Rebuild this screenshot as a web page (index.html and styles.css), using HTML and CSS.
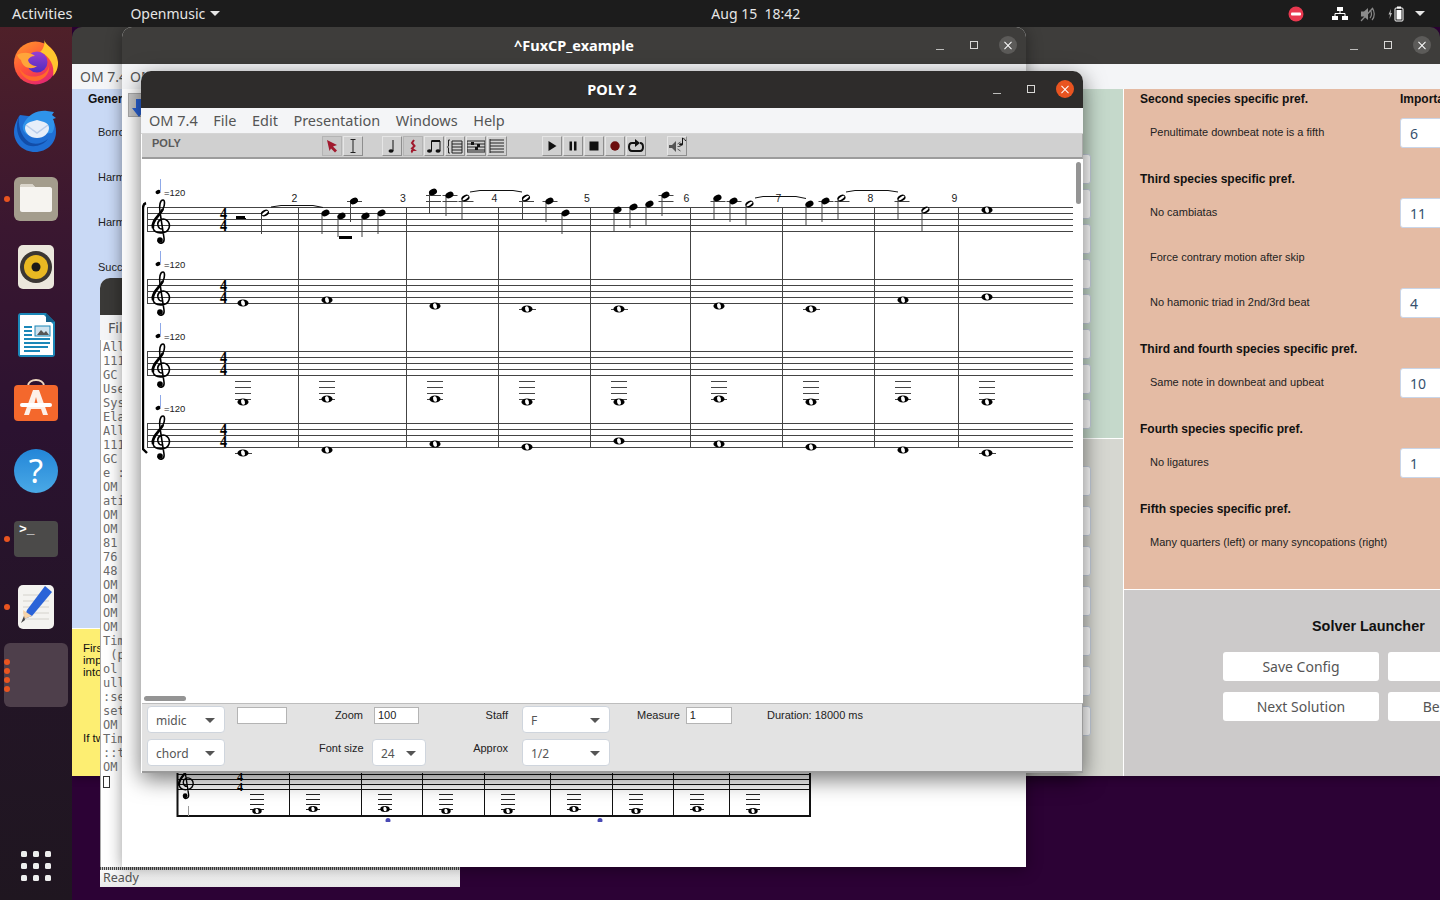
FILE: index.html
```html
<!DOCTYPE html>
<html lang="en">
<head>
    <meta charset="UTF-8">
    <meta name="viewport" content="width=device-width, initial-scale=1.0">
    <title>POLY 2</title>
    <link rel="stylesheet" href="styles.css">
</head>
<body>
    <div class="topbar">
        <span class="activities">Activities</span>
        <span class="app-name">Openmusic<i class="caret"></i></span>
        <span class="clock">Aug 15&nbsp; 18:42</span>
        <div class="tray">
            <svg class="tray-dnd" width="16" height="16" viewBox="0 0 16 16"><circle cx="8" cy="8" r="7.5" fill="#e8384f"/><rect x="3" y="6.5" width="10" height="3" rx="1" fill="#fff"/></svg>
            <svg class="tray-net" width="16" height="14" viewBox="0 0 16 14"><path d="M5 0h6v4H5zM0 9h6v4H0zM10 9h6v4h-6z" fill="#fff"/><path d="M8 4v3M3 9V6.500h10V9" fill="none" stroke="#fff"/></svg>
            <svg class="tray-vol" width="16" height="16" viewBox="0 0 16 16"><path d="M1 5.500h3L8 2v12L4 10.500H1z" fill="#8a8a8a"/><path d="M10 4c2 2 2 6 0 8M12 2c3 3 3 9 0 12" fill="none" stroke="#8a8a8a" stroke-width="1.200"/><path d="M1 15L13 2" stroke="#8a8a8a" stroke-width="1.200"/></svg>
            <svg class="tray-bat" width="16" height="16" viewBox="0 0 16 16"><path d="M3 3L0.500 8.500H2L1.500 13 4 7H2.500z" fill="#bbb"/><rect x="7" y="2" width="8" height="13" rx="1" fill="none" stroke="#fff"/><rect x="9" y="0.500" width="4" height="2" fill="#fff"/><rect x="8.500" y="4" width="5" height="9.500" fill="#fff"/></svg>
            <i class="caret"></i>
        </div>
    </div>

    <nav class="dock">
        <div class="dock-item">
            <svg width="48" height="48" viewBox="0 2 48 48">
                <defs>
                    <linearGradient id="foxBody" x1="0" y1="0" x2="0.6" y2="1"><stop offset="0" stop-color="#ff9d2a"/><stop offset="0.6" stop-color="#ff4f3a"/><stop offset="1" stop-color="#e42a6e"/></linearGradient>
                    <linearGradient id="foxGlobe" x1="0" y1="0" x2="0" y2="1"><stop offset="0" stop-color="#9a3fd0"/><stop offset="1" stop-color="#4f2cc0"/></linearGradient>
                </defs>
                <circle cx="23.500" cy="26" r="21.500" fill="url(#foxBody)"/>
                <path d="M32 2c1 7 13 10 14 23 .400 6-2 11-5 14 2-10-3-20-13-24 4-3 5-9 4-13z" fill="#ffc62e"/>
                <circle cx="25" cy="25" r="10.500" fill="url(#foxGlobe)"/>
                <path d="M5 18c5-3 13-3 18 1-4 0-6 2-7 4 1 4 5 6 9 6-6 5-15 1-16-6-2-1-3-3-4-5z" fill="#ffa53a"/>
                <path d="M7 30c3 8 12 11 19 9 6-1 10-5 11-10 1 8-6 15-14 15-8 0-15-6-16-14z" fill="#ff6a2c"/>
            </svg>
        </div>
        <div class="dock-item">
            <svg width="48" height="48" viewBox="0 1 48 48">
                <path d="M8 9c-2 3-6 9-6 17 0 11 9 20 21 20s21-9 21-20c0-5-1-9-4-13z" fill="#1f6fd4"/>
                <path d="M11 19c5-11 15-15 24-14l7 1-2 3 4 3-3 1c2 4 2 10-1 14l-24 2c-4-2-6-6-5-10z" fill="#2f93ea"/>
                <path d="M13 22c0-3 2-5 5-6l7-2 7 2c3 1 5 3 5 6 0 5-5 10-12 10s-12-5-12-10z" fill="#e6eef9"/>
                <path d="M14 19l11 8 11-8" fill="none" stroke="#b9cdea" stroke-width="1.500"/>
                <path d="M7 10c-1 8 1 20 10 26 5 3 13 2 19-3-5 7-17 10-24 4C5 31 3 20 7 10z" fill="#124da8"/>
            </svg>
        </div>
        <div class="dock-item">
            <i class="run-dot"></i>
            <svg width="48" height="48" viewBox="0 0 48 48">
                <rect x="2" y="2" width="44" height="44" rx="6" fill="#a49d8d"/>
                <path d="M8 11c0-1 1-2 2-2h10l3 3h15c1 0 2 1 2 2v21c0 1-1 2-2 2H10c-1 0-2-1-2-2z" fill="#f6f4f0"/>
                <path d="M8 11c0-1 1-2 2-2h10l3 3H8z" fill="#d9d4ca"/>
            </svg>
        </div>
        <div class="dock-item">
            <svg width="48" height="48" viewBox="0 0 48 48">
                <rect x="6" y="2" width="36" height="44" rx="5" fill="#ebe7dc"/>
                <circle cx="24" cy="24" r="16" fill="#3b3733"/>
                <circle cx="24" cy="24" r="12" fill="#e9b922"/>
                <circle cx="24" cy="24" r="4.500" fill="#1c1a18"/>
            </svg>
        </div>
        <div class="dock-item">
            <svg width="48" height="48" viewBox="0 0 48 48">
                <path d="M9 2h25l9 9v32c0 2-1 3-3 3H9c-2 0-3-1-3-3V5c0-2 1-3 3-3z" fill="#1b87b8"/>
                <path d="M9 4h23l9 9v30c0 1 0 1-1 1H9c-1 0-1 0-1-1V5c0-1 0-1 1-1z" fill="#fff"/>
                <path d="M34 2l9 9h-9z" fill="#14618c"/>
                <path d="M12 16h8M12 20h8M12 24h8M12 28h26M12 32h26M12 36h24M12 40h16" stroke="#1b87b8" stroke-width="2"/>
                <rect x="23" y="15" width="15" height="10" fill="#cfe3ef" stroke="#1b87b8"/>
                <path d="M25 24l4-5 3 3 2-2 3 4z" fill="#555"/>
            </svg>
        </div>
        <div class="dock-item">
            <svg width="48" height="48" viewBox="0 0 48 48">
                <path d="M16 7c0-8 16-8 16 0" fill="none" stroke="#f0d9c0" stroke-width="2"/>
                <rect x="2" y="6" width="44" height="36" rx="4" fill="#f4682c"/>
                <path d="M21 11h6l9 25h-5l-2-6H19l-2 6h-5z" fill="#fdf0e8"/>
                <path d="M22 26h4l-2-8z" fill="#f4682c"/>
                <rect x="8" y="24" width="32" height="4" rx="2" fill="#fff"/>
            </svg>
        </div>
        <div class="dock-item">
            <svg width="48" height="48" viewBox="0 0 48 48">
                <defs><linearGradient id="helpBall" x1="0" y1="0" x2="0" y2="1"><stop offset="0" stop-color="#2386d8"/><stop offset="1" stop-color="#4aa9e6"/></linearGradient></defs>
                <circle cx="24" cy="24" r="22" fill="url(#helpBall)"/>
                <text class="help-mark" x="24" y="36" text-anchor="middle">?</text>
            </svg>
        </div>
        <div class="dock-item">
            <i class="run-dot"></i>
            <svg width="48" height="48" viewBox="0 0 48 48">
                <rect x="2" y="6" width="44" height="36" rx="4" fill="#4b4a49"/>
                <text class="term-mark" x="7" y="18">&gt;_</text>
            </svg>
        </div>
        <div class="dock-item">
            <i class="run-dot"></i>
            <svg width="48" height="48" viewBox="0 0 48 48">
                <rect x="6" y="2" width="36" height="44" rx="5" fill="#f4f3f0"/>
                <path d="M11 12h26M11 18h26M11 24h26M11 30h26M11 36h26" stroke="#d4d2cc"/>
                <path d="M33 3l7 6-20 24-8 3 3-9z" fill="#2a63d8"/>
                <path d="M11 27l9 6-8 3z" fill="#f6d3a8"/>
                <path d="M12 33l-3 7 4-3z" fill="#444"/>
            </svg>
        </div>
        <div class="dock-item is-active">
            <div class="active-bg"></div>
            <div class="run-dots"><i></i><i></i><i></i><i></i></div>
        </div>
        <div class="apps-grid">
            <i></i><i></i><i></i><i></i><i></i><i></i><i></i><i></i><i></i>
        </div>
    </nav>

    <!-- main config window, furthest back -->
    <section class="window win-main">
        <div class="titlebar">
            <div class="win-controls"><i class="ctl-min"></i><i class="ctl-max"></i><i class="ctl-close"></i></div>
        </div>
        <div class="menubar"><span>OM 7.4</span></div>
        <div class="main-body">
            <div class="col-left">
                <div class="col-blue">
                    <div class="pref-head">Gener</div>
                    <div class="pref-row"><span class="pref-label">Borro</span></div>
                    <div class="pref-row"><span class="pref-label">Harm</span></div>
                    <div class="pref-row"><span class="pref-label">Harm</span></div>
                    <div class="pref-row"><span class="pref-label">Succ</span></div>
                </div>
                <div class="col-yellow">
                    <p>Firs</p>
                    <p>imp</p>
                    <p>into</p>
                    <p class="note-two">If tw</p>
                </div>
            </div>
            <div class="col-mid">
                <div class="mid-green">
                    <i></i><i></i><i></i><i></i><i></i><i></i><i></i><i></i>
                </div>
                <div class="mid-grey">
                    <i></i><i></i><i></i><i></i><i></i><i></i><i></i>
                </div>
            </div>
            <div class="col-right">
                <div class="col-peach">
                    <div class="pref-head"><span class="pref-label">Second species specific pref.</span><span class="pref-import">Importance</span></div>
                    <div class="pref-row"><span class="pref-label">Penultimate downbeat note is a fifth</span><span class="num-box">6</span></div>
                    <div class="pref-head spaced">Third species specific pref.</div>
                    <div class="pref-row"><span class="pref-label">No cambiatas</span><span class="num-box">11</span></div>
                    <div class="pref-row"><span class="pref-label">Force contrary motion after skip</span></div>
                    <div class="pref-row"><span class="pref-label">No hamonic triad in 2nd/3rd beat</span><span class="num-box">4</span></div>
                    <div class="pref-head spaced">Third and fourth species specific pref.</div>
                    <div class="pref-row"><span class="pref-label">Same note in downbeat and upbeat</span><span class="num-box">10</span></div>
                    <div class="pref-head spaced">Fourth species specific pref.</div>
                    <div class="pref-row"><span class="pref-label">No ligatures</span><span class="num-box">1</span></div>
                    <div class="pref-head spaced">Fifth species specific pref.</div>
                    <div class="pref-row"><span class="pref-label">Many quarters (left) or many syncopations (right)</span></div>
                </div>
                <div class="col-solver">
                    <h3>Solver Launcher</h3>
                    <div class="solver-grid">
                        <span class="solver-btn">Save Config</span>
                        <span class="solver-btn"></span>
                        <span class="solver-btn">Next Solution</span>
                        <span class="solver-btn">Best Solution</span>
                    </div>
                </div>
            </div>
        </div>
    </section>

    <!-- listener -->
    <section class="window win-listener">
        <div class="titlebar"></div>
        <div class="menubar"><span>File</span></div>
        <pre class="listener-text">All
111
GC
Use
Sys
Ela
All
111
GC
e :
OM
ati
OM
OM
81
76
48
OM
OM
OM
OM
Tim
 (p
ol
ull
:se
set
OM
Tim
::t
OM
<i class="text-cursor"></i></pre>
        <div class="statusbar">Ready</div>
    </section>

    <!-- patch window -->
    <section class="window win-fux">
        <div class="titlebar">
            <span class="win-title">^FuxCP_example</span>
            <div class="win-controls"><i class="ctl-min"></i><i class="ctl-max"></i><i class="ctl-close"></i></div>
        </div>
        <div class="menubar"><span>OM 7.4</span></div>
        <div class="fux-tool">
            <svg width="14" height="18" viewBox="0 0 14 18"><path d="M4 0h6v9h4l-7 9-7-9h4z" fill="#2a63d8"/></svg>
        </div>
        <svg id="underScore" class="under-score" width="640" height="52" viewBox="174 770 640 52"></svg>
    </section>

    <!-- score editor -->
    <section class="window win-poly">
        <div class="titlebar poly-title">
            <span class="win-title">POLY 2</span>
            <div class="win-controls"><i class="ctl-min"></i><i class="ctl-max"></i><i class="ctl-close is-hot"></i></div>
        </div>
        <div class="menubar poly-menu">
            <span>OM 7.4</span><span>File</span><span>Edit</span><span>Presentation</span><span>Windows</span><span>Help</span>
        </div>
        <div class="poly-tools">
            <span class="poly-label">POLY</span>
            <div class="tool-group">
                <span class="tool is-on"><svg width="16" height="16" viewBox="0 0 16 16"><path d="M3 2l10 5-4 1.500 4 4-2 2-4-4L5.500 13z" fill="#a11a2e"/></svg></span>
                <span class="tool"><svg width="16" height="16" viewBox="0 0 16 16"><path d="M5.500 1.500h5M5.500 14.500h5M8 1.500v13" fill="none" stroke="#222"/></svg></span>
            </div>
            <div class="tool-group group-notes">
                <span class="tool"><svg width="16" height="16" viewBox="0 0 16 16"><ellipse cx="7" cy="13" rx="2.500" ry="1.800" fill="#111"/><path d="M9 13V2" stroke="#111"/></svg></span>
                <span class="tool is-on"><svg width="16" height="16" viewBox="0 0 16 16"><path d="M9 2l-2 3 2.500 3L7 10.500l2 1.500c-2 0-3 1-1.500 2.500" fill="none" stroke="#a11a2e" stroke-width="2"/></svg></span>
                <span class="tool"><svg width="16" height="16" viewBox="0 0 16 16"><ellipse cx="3.500" cy="13" rx="2.500" ry="1.800" fill="#111"/><ellipse cx="12" cy="13" rx="2.500" ry="1.800" fill="#111"/><path d="M5.500 13V3h8.500v10" fill="none" stroke="#111"/><path d="M5.500 3h8.500" stroke="#111" stroke-width="2"/></svg></span>
                <span class="tool"><svg width="16" height="16" viewBox="0 0 16 16"><path d="M5 3h10M5 6h10M5 9h10M5 12h10M5 15h10" stroke="#222"/><path d="M5 3v12M15 3v12" stroke="#222"/><path d="M3 2L1.500 2v6l-1 1 1 1v5L3 15" fill="none" stroke="#222"/></svg></span>
                <span class="tool"><svg width="18" height="16" viewBox="0 0 18 16"><path d="M0 3h18M0 6h18M0 9h18M0 12h18M0 14h18" stroke="#222"/><path d="M0 3v11M18 3v11" stroke="#222"/><path d="M4 4h3v3H4zM10 6h3v3h-3zM8 9h3v3H8z" fill="#111"/></svg></span>
                <span class="tool"><svg width="16" height="16" viewBox="0 0 16 16"><path d="M1 2h14M1 5h14M1 8h14M1 11h14M1 14h14" stroke="#222"/><path d="M1 1v14" stroke="#222"/></svg></span>
            </div>
            <div class="tool-group group-play">
                <span class="tool"><svg width="12" height="12" viewBox="0 0 12 12"><path d="M2.500 1l8 5-8 5z" fill="#111"/></svg></span>
                <span class="tool"><svg width="12" height="12" viewBox="0 0 12 12"><path d="M2.500 1.500h2.500v9H2.500zM7 1.500h2.500v9H7z" fill="#111"/></svg></span>
                <span class="tool"><svg width="12" height="12" viewBox="0 0 12 12"><rect x="1.500" y="1.500" width="9" height="9" fill="#111"/></svg></span>
                <span class="tool"><svg width="12" height="12" viewBox="0 0 12 12"><circle cx="6" cy="6" r="4.700" fill="#6c0c0c"/></svg></span>
                <span class="tool"><svg width="18" height="14" viewBox="0 0 18 14"><path d="M9 4H5C1 4 1 12 5 12h8c4 0 4-8 0-8" fill="none" stroke="#111" stroke-width="2"/><path d="M8 0l5 4-5 4z" fill="#111"/></svg></span>
            </div>
            <div class="tool-group group-midi">
                <span class="tool"><svg width="18" height="18" viewBox="0 0 18 18"><path d="M1 8h3l4-4v11l-4-4H1z" fill="#555"/><path d="M9.500 7l3-2M9.500 9.500h3M9.500 12l3 2" stroke="#555"/><ellipse cx="13" cy="7.500" rx="1.800" ry="1.300" fill="#111"/><path d="M14.500 7.500V1c1 1 3 1 3 3" fill="none" stroke="#111"/></svg></span>
            </div>
        </div>
        <div class="score-area">
            <svg id="score" width="940" height="544" viewBox="142 159 940 544"></svg>
            <i class="scroll-v"></i>
            <i class="scroll-h"></i>
        </div>
        <div class="poly-panel">
            <div class="select col-1"><span>midic</span><i class="sel-caret"></i></div>
            <div class="field-box col-2"></div>
            <div class="panel-label col-3">Zoom</div>
            <div class="field-box zoom-box col-4">100</div>
            <div class="panel-label staff-label col-5">Staff</div>
            <div class="select sel-wide col-6"><span>F</span><i class="sel-caret"></i></div>
            <div class="measure col-7"><span class="panel-label">Measure</span><div class="field-box measure-box">1</div></div>
            <div class="panel-label col-8">Duration: 18000 ms</div>

            <div class="select col-1"><span>chord</span><i class="sel-caret"></i></div>
            <div class="panel-label col-3">Font size</div>
            <div class="select sel-size col-4"><span>24</span><i class="sel-caret"></i></div>
            <div class="panel-label staff-label col-5">Approx</div>
            <div class="select sel-wide col-6"><span>1/2</span><i class="sel-caret"></i></div>
        </div>
    </section>

    <script src="score.js"></script>
</body>
</html>
```

FILE: styles.css
```css
html, body {
    margin: 0;
    padding: 0;
}
body {
    width: 1440px;
    height: 900px;
    overflow: hidden;
    position: relative;
    background-color: #2c0235;
    font-family: "Liberation Sans", Arial, sans-serif;
}
i {
    display: block;
}

/* top bar */
.topbar {
    height: 27px;
    background-color: #1c1c1c;
    color: #e6e6e6;
    display: flex;
    align-items: center;
    font-family: "Noto Sans", sans-serif;
    font-size: 14px;
    position: relative;
    z-index: 5;
}
.activities {
    margin-left: 12px;
    padding-bottom: 2px;
    font-size: 14.500px;
}
.app-name {
    margin-left: 58px;
    display: flex;
    align-items: center;
}
.caret {
    width: 0;
    height: 0;
    border-left: 5px solid transparent;
    border-right: 5px solid transparent;
    border-top: 5px solid #e6e6e6;
    margin-left: 5px;
}
.clock {
    margin-left: 491px;
}
.tray {
    margin-left: auto;
    display: flex;
    align-items: center;
    padding-right: 15px;
}
.tray-net {
    margin-left: 28px;
}
.tray-vol {
    margin-left: 12px;
}
.tray-bat {
    margin-left: 12px;
}
.tray .caret {
    margin-left: 11px;
}

/* dock */
.dock {
    position: absolute;
    left: 0;
    top: 27px;
    width: 72px;
    height: 873px;
    box-sizing: border-box;
    padding-top: 2px;
    display: flex;
    flex-direction: column;
    background: linear-gradient(to bottom, #4f2029 0, #3a1730 200px, #2b1230 400px, #231526 650px, #1f1620 100%);
    z-index: 4;
}
.dock-item {
    height: 68px;
    flex: none;
    display: flex;
    align-items: center;
    justify-content: center;
    position: relative;
}
.run-dot {
    position: absolute;
    left: 4px;
    top: 31px;
    width: 6px;
    height: 6px;
    border-radius: 50%;
    background-color: #e95420;
}
.active-bg {
    width: 64px;
    height: 64px;
    border-radius: 6px;
    background-color: #4e3f4b;
}
.run-dots {
    position: absolute;
    left: 4px;
    top: 18px;
    display: flex;
    flex-direction: column;
    gap: 3px;
}
.run-dots i {
    width: 6px;
    height: 6px;
    border-radius: 50%;
    background-color: #e95420;
}
.apps-grid {
    margin-top: auto;
    margin-bottom: 19px;
    margin-left: 21px;
    width: 30px;
    display: grid;
    grid-template-columns: repeat(3, 6px);
    gap: 6px;
}
.apps-grid i {
    width: 6px;
    height: 6px;
    border-radius: 1.500px;
    background-color: #eeeeee;
}
.help-mark {
    font-family: "Noto Sans", sans-serif;
    font-size: 33px;
    fill: #fff;
}
.term-mark {
    font-family: "Liberation Mono", monospace;
    font-weight: bold;
    font-size: 13px;
    fill: #fff;
}

/* windows */
.window {
    position: absolute;
    display: flex;
    flex-direction: column;
    border-radius: 10px 10px 0 0;
    overflow: hidden;
}
.titlebar {
    height: 37px;
    flex: none;
    box-sizing: border-box;
    padding-bottom: 2px;
    background-color: #3e3d3b;
    color: #fff;
    display: flex;
    align-items: center;
    justify-content: center;
    position: relative;
    font-family: "Noto Sans", sans-serif;
    font-weight: bold;
    font-size: 14.500px;
}
.win-controls {
    position: absolute;
    right: 9px;
    top: 9px;
    display: flex;
    gap: 16px;
}
.win-controls i {
    width: 18px;
    height: 18px;
    position: relative;
}
.ctl-min::after {
    content: "";
    position: absolute;
    left: 5px;
    right: 5px;
    top: 13px;
    height: 1px;
    background-color: #bdbdbb;
}
.ctl-max::after {
    content: "";
    position: absolute;
    left: 5px;
    top: 5px;
    width: 6px;
    height: 6px;
    border: 1px solid #d8d8d6;
}
.ctl-close {
    border-radius: 50%;
    background-color: #5c5b59;
}
.ctl-close.is-hot {
    background-color: #e95420;
}
.ctl-close::before,
.ctl-close::after {
    content: "";
    position: absolute;
    left: 4px;
    right: 4px;
    top: 8.500px;
    height: 1px;
    background-color: #fff;
    transform: rotate(45deg);
}
.ctl-close::after {
    transform: rotate(-45deg);
}
.menubar {
    height: 25px;
    flex: none;
    background-color: #f4f5f7;
    color: #555;
    display: flex;
    align-items: center;
    padding-left: 8px;
    font-family: "Noto Sans", sans-serif;
    font-size: 14px;
}

/* main window */
.win-main {
    left: 72px;
    top: 27px;
    width: 1368px;
    height: 749px;
    box-shadow: 0 2px 8px rgba(0, 0, 0, 0.3);
}
.main-body {
    flex: 1;
    display: flex;
    overflow: hidden;
}
.col-left {
    width: 928px;
    flex: none;
    display: flex;
    flex-direction: column;
}
.col-blue {
    height: 540px;
    background-color: #c9d9f5;
    padding-left: 16px;
    border-bottom: 1px solid #fff;
    box-sizing: border-box;
}
.col-yellow {
    flex: 1;
    background-color: #fdee72;
    padding: 13px 0 0 11px;
    font-size: 11.500px;
    line-height: 12px;
    color: #111;
}
.col-yellow p {
    margin: 0;
}
.col-yellow .note-two {
    margin-top: 54px;
}
.col-mid {
    width: 123px;
    flex: none;
    border-right: 1px solid #fff;
    display: flex;
    flex-direction: column;
    align-items: stretch;
}
.mid-green {
    height: 350px;
    box-sizing: border-box;
    padding-top: 65px;
    background-color: #c5d9cb;
    border-bottom: 1px solid #fff;
    display: flex;
    flex-direction: column;
    align-items: flex-end;
    gap: 5px;
    padding-right: 32px;
}
.mid-grey {
    flex: 1;
    background-color: #d6d7d1;
    padding: 27px 32px 0 0;
    display: flex;
    flex-direction: column;
    align-items: flex-end;
    gap: 10px;
}
.col-mid i {
    width: 60px;
    height: 30px;
    flex: none;
    box-sizing: border-box;
    background-color: #fff;
    border: 1px solid #c5cfdd;
    border-radius: 3px;
}
.col-right {
    flex: 1;
    display: flex;
    flex-direction: column;
    min-width: 0;
}
.col-peach {
    height: 501px;
    flex: none;
    box-sizing: border-box;
    background-color: #e4bba4;
    border-bottom: 1px solid #fff;
    padding-left: 16px;
    white-space: nowrap;
    overflow: hidden;
}
.pref-head {
    height: 21px;
    box-sizing: border-box;
    padding-bottom: 2px;
    display: flex;
    align-items: center;
    font-size: 12px;
    font-weight: bold;
    color: #111;
}
.pref-head.spaced {
    margin-top: 14px;
}
.pref-row {
    height: 45px;
    display: flex;
    align-items: center;
    padding-left: 10px;
    font-size: 11px;
    color: #222;
}
.pref-head .pref-label {
    width: 260px;
    flex: none;
}
.pref-row .pref-label {
    width: 250px;
    flex: none;
    padding-bottom: 2px;
}
.col-blue .pref-row .pref-label {
    width: auto;
}
.num-box {
    width: 60px;
    height: 30px;
    flex: none;
    box-sizing: border-box;
    background-color: #fff;
    border: 1px solid #c9d5e8;
    border-radius: 3px;
    padding-left: 9px;
    font-family: "Noto Sans", sans-serif;
    font-size: 14px;
    line-height: 30px;
    color: #36506e;
}
.col-solver {
    flex: 1;
    background-color: #cccaca;
    padding-left: 99px;
    white-space: nowrap;
    overflow: hidden;
}
.col-solver h3 {
    margin: 27px 0 0 89px;
    font-size: 14.400px;
    line-height: 18px;
    color: #111;
}
.solver-grid {
    margin-top: 17px;
    display: grid;
    grid-template-columns: 156px 156px;
    grid-auto-rows: 29px;
    column-gap: 9px;
    row-gap: 11px;
}
.solver-btn {
    background-color: #fff;
    border-radius: 3px;
    text-align: center;
    font-family: "Noto Sans", sans-serif;
    font-size: 14px;
    line-height: 29px;
    color: #555;
}

/* listener */
.win-listener {
    left: 100px;
    top: 278px;
    width: 360px;
    height: 609px;
    background-color: #fff;
}
.win-listener .titlebar {
    background-color: #3a3937;
}
.listener-text {
    margin: 0;
    flex: 1;
    padding: 0 0 0 2px;
    border-left: 1px solid #aaa;
    font-family: "DejaVu Sans Mono", monospace;
    font-size: 12px;
    line-height: 14px;
    color: #6c6c6c;
}
.text-cursor {
    display: inline-block;
    width: 5px;
    height: 10px;
    margin-top: 2px;
    border: 1px solid #333;
}
.statusbar {
    height: 20px;
    flex: none;
    box-sizing: border-box;
    padding: 3px 0 0 3px;
    background:
        repeating-linear-gradient(90deg, #444 0, #444 1px, #ccc 1px, #ccc 2px) top / 100% 3px no-repeat,
        linear-gradient(to bottom, #fff, #e9e9e9);
    font-family: "Noto Sans", sans-serif;
    font-size: 12.500px;
    line-height: 15px;
    color: #555;
}

/* patch window */
.win-fux {
    left: 122px;
    top: 27px;
    width: 904px;
    height: 840px;
    background-color: #fff;
    box-shadow: 0 2px 16px rgba(0, 0, 0, 0.4);
}
.fux-tool {
    width: 22px;
    height: 24px;
    flex: none;
    margin: 4px 0 0 6px;
    box-sizing: border-box;
    padding: 5px 0 0 3px;
    background-color: #c8c8c8;
    border: 1px solid #aaa;
}
.under-score {
    margin: 653px 0 0 52px;
    flex: none;
}

/* score editor */
.win-poly {
    left: 141px;
    top: 71px;
    width: 942px;
    height: 702px;
    background-color: #fff;
    box-shadow: 0 6px 22px rgba(0, 0, 0, 0.55);
    z-index: 3;
}
.poly-title {
    background-color: #2e2c2b;
}
.poly-menu {
    gap: 15.500px;
    border-bottom: 1px solid #d5d5d5;
    box-sizing: border-box;
    height: 26px;
    padding-bottom: 2px;
    font-size: 14.500px;
}
.poly-tools {
    height: 25px;
    flex: none;
    box-sizing: border-box;
    margin-left: 1px;
    background-color: #d0d0d0;
    border-bottom: 2px solid #9c9c9c;
    border-right: 1px solid #aaa;
    display: flex;
    align-items: flex-start;
    padding: 2px 0 0 10px;
}
.poly-label {
    width: 170px;
    flex: none;
    font-size: 11px;
    font-weight: bold;
    line-height: 14px;
    color: #5a5a5a;
}
.tool-group {
    display: flex;
    gap: 1px;
}
.group-notes {
    margin-left: 19px;
}
.group-play {
    margin-left: 35px;
}
.group-midi {
    margin-left: 21px;
}
.tool {
    width: 20px;
    height: 20px;
    box-sizing: border-box;
    display: flex;
    align-items: center;
    justify-content: center;
    background-color: #d0d0d0;
    border: 1px solid;
    border-color: #e6e6e6 #8e8e8e #8e8e8e #e6e6e6;
}
.tool.is-on {
    background-color: #c8c8c8;
    border-color: #b4b4b4;
}
.score-area {
    flex: 1;
    position: relative;
    margin-left: 1px;
    min-height: 0;
}
.score-area svg {
    display: block;
}
.scroll-v {
    position: absolute;
    right: 2px;
    top: 3px;
    width: 5px;
    height: 42px;
    border-radius: 3px;
    background-color: #949494;
}
.scroll-h {
    position: absolute;
    left: 2px;
    bottom: 2px;
    width: 42px;
    height: 5px;
    border-radius: 3px;
    background-color: #949494;
}
.poly-panel {
    height: 70px;
    flex: none;
    box-sizing: border-box;
    margin-left: 1px;
    padding: 2px 0 0 5px;
    background-color: #e3e3e3;
    border-top: 1px solid #bdbdbd;
    border-right: 1px solid #9a9a9a;
    border-bottom: 2px solid #9a9a9a;
    display: grid;
    grid-template-columns: 90px 82px 53px 64px 86px 115px 130px auto;
    grid-auto-rows: 27px;
    row-gap: 6px;
    white-space: nowrap;
}
.col-1 { grid-column: 1; }
.col-2 { grid-column: 2; }
.col-3 { grid-column: 3; }
.col-4 { grid-column: 4; }
.col-5 { grid-column: 5; }
.col-6 { grid-column: 6; }
.col-7 { grid-column: 7; }
.col-8 { grid-column: 8; }
.select {
    width: 78px;
    height: 27px;
    box-sizing: border-box;
    background-color: #fff;
    border: 1px solid #cfd5dd;
    border-radius: 4px;
    display: flex;
    align-items: center;
    justify-content: space-between;
    padding: 1px 9px 0 8px;
    font-family: "Noto Sans", sans-serif;
    font-size: 12px;
    color: #555;
}
.sel-wide {
    width: 88px;
}
.sel-size {
    width: 54px;
}
.sel-caret {
    width: 0;
    height: 0;
    border-left: 5px solid transparent;
    border-right: 5px solid transparent;
    border-top: 5px solid #555;
}
.field-box {
    width: 50px;
    height: 17px;
    box-sizing: border-box;
    margin-top: 1px;
    background-color: #fff;
    border: 1px solid #b4b4b4;
    padding-left: 3px;
    font-size: 11px;
    line-height: 15px;
    color: #222;
}
.zoom-box {
    width: 45px;
    margin-left: 2px;
}
.measure-box {
    width: 46px;
}
.panel-label {
    font-size: 11px;
    line-height: 18px;
    color: #222;
    text-align: right;
    padding-right: 9px;
    box-sizing: border-box;
}
.staff-label {
    padding-right: 14px;
}
.col-8.panel-label {
    text-align: left;
}
.measure {
    display: flex;
    align-items: flex-start;
    gap: 6px;
}
.measure .panel-label {
    padding-right: 0;
}
```

FILE: score.js
```js
const NS = 'http://www.w3.org/2000/svg';

function add(svg, tag, attrs, text) {
    const node = document.createElementNS(NS, tag);
    for (const k in attrs) node.setAttribute(k, attrs[k]);
    if (text) node.textContent = text;
    svg.appendChild(node);
    return node;
}

function hline(svg, x1, x2, y, color) {
    add(svg, 'rect', { x: x1, y: y, width: x2 - x1, height: 1, fill: color || '#444' });
}

function vline(svg, x, y1, y2, color) {
    add(svg, 'rect', { x: x, y: y1, width: 1, height: y2 - y1, fill: color || '#444' });
}

// treble clef, x is the centre of the stem, gLine the y of the G line, k the scale
function clef(svg, x, gLine, k) {
    const g = add(svg, 'g', { transform: `translate(${x} ${gLine}) scale(${k})` });
    add(g, 'path', {
        d: 'M1 4C-3 4-5-2-1-5C4-8 10-3 8 3C6 9-6 10-8 3C-10-4-1-10 2-16C4-20 4-25 2-25C-1-25-2-19-1-13L3 13C4 19-3 20-3 15',
        fill: 'none', stroke: '#000', 'stroke-width': 1.6
    });
    add(g, 'path', { d: 'M-8 3C-10-4-1-10 2-16', fill: 'none', stroke: '#000', 'stroke-width': 2.6 });
    add(g, 'circle', { cx: -1, cy: 15, r: 2.8, fill: '#000' });
}

function tempo(svg, top) {
    add(svg, 'ellipse', { cx: 158, cy: top - 15, rx: 2.6, ry: 2, fill: '#000', transform: `rotate(-25 158 ${top - 15})` });
    vline(svg, 160, top - 28, top - 15, '#8fa9e8');
    add(svg, 'text', { x: 164, y: top - 11, class: 'tempo' }, '=120');
}

function meterDigit(svg, x, y, sx, sy) {
    add(svg, 'text', { class: 'meter', transform: `translate(${x} ${y}) scale(${sx} ${sy})` }, '4');
}

function timeSig(svg, x, top) {
    meterDigit(svg, x, top + 12, 0.95, 1.15);
    meterDigit(svg, x, top + 24, 0.95, 1.15);
}

function head(svg, x, y) {
    add(svg, 'ellipse', { cx: x, cy: y, rx: 4.2, ry: 3, fill: '#000', transform: `rotate(-25 ${x} ${y})` });
}

function ledgers(svg, x, y) {
    if (y <= 201) hline(svg, x - 7, x + 8, 201);
    if (y <= 195) hline(svg, x - 7, x + 8, 195);
}

function quarter(svg, x, y) {
    ledgers(svg, x, y);
    vline(svg, x - 4, y, y + 21);
    head(svg, x, y);
}

function half(svg, x, y) {
    ledgers(svg, x, y);
    vline(svg, x - 4, y, y + 21);
    head(svg, x, y);
    add(svg, 'ellipse', { cx: x, cy: y, rx: 3.4, ry: 1.2, fill: '#fff', transform: `rotate(-35 ${x} ${y})` });
}

function whole(svg, x, y, k) {
    const s = k || 1;
    add(svg, 'ellipse', { cx: x, cy: y, rx: 5.6 * s, ry: 3.5 * s, fill: '#000' });
    add(svg, 'ellipse', { cx: x, cy: y, rx: 1.9 * s, ry: 2.8 * s, fill: '#fff', transform: `rotate(-15 ${x} ${y})` });
}

function tie(svg, pts) {
    add(svg, 'polyline', { points: pts, fill: 'none', stroke: '#111', 'stroke-width': 1 });
}

const score = document.getElementById('score');
const tops = [207, 279, 351, 423];
const bars = [298, 406, 498, 590, 690, 782, 874, 958];
const xs = [243, 327, 435, 527, 619, 719, 811, 903, 987];

// bracket
add(score, 'path', { d: 'M146 203C143 204 143 206 143 208V449L147 453', fill: 'none', stroke: '#000', 'stroke-width': 2.4 });

tops.forEach(top => {
    for (let i = 0; i < 5; i++) hline(score, 147, 1073, top + i * 6);
    vline(score, 147, top, top + 25);
    tempo(score, top);
    clef(score, 161, top + 18, 1);
    timeSig(score, 220, top);
});
bars.forEach(x => vline(score, x, 207, 448));

// bar numbers
[[294.5, 2], [403, 3], [494.5, 4], [587, 5], [686.5, 6], [778.5, 7], [870.5, 8], [954.5, 9]].forEach(b => {
    add(score, 'text', { x: b[0], y: 202, class: 'bar-num' }, String(b[1]));
});

// cantus line, first staff
add(score, 'rect', { x: 236, y: 216, width: 9, height: 3, fill: '#000' });
hline(score, 236, 246, 218, '#000');
half(score, 265, 213);
[[325.5, 213], [341.5, 216], [354, 201], [365.5, 216], [381.5, 213], [433, 192], [449.5, 195],
 [549.5, 201], [565.5, 213], [617.5, 210], [633.5, 207], [649.5, 204], [665.5, 195],
 [717.5, 198], [733.5, 201], [809.5, 204], [825.5, 201]].forEach(n => quarter(score, n[0], n[1]));
[[465.5, 198], [526, 198], [749.5, 204], [841.5, 198], [901.5, 198], [925.5, 210]].forEach(n => half(score, n[0], n[1]));
whole(score, 987, 210);
add(score, 'rect', { x: 339, y: 236, width: 13, height: 3, fill: '#000' });
tie(score, '271,207 281,205.5 313,205.5 323,207.5');
tie(score, '470,192 480,190.5 513,190.5 522,192');
tie(score, '755,198 763,196.5 796,196.5 806,198.5');
tie(score, '846,192 855,190.5 888,190.5 898,192');

// second staff
[303, 300, 306, 309, 309, 306, 309, 300, 297].forEach((y, i) => {
    if (y === 309) hline(score, xs[i] - 8, xs[i] + 9, 309);
    whole(score, xs[i], y);
});
// third staff, all far below
[402, 399, 399, 402, 402, 399, 402, 399, 402].forEach((y, i) => {
    [381, 387, 393, 399].forEach(l => hline(score, xs[i] - 8, xs[i] + 8, l));
    whole(score, xs[i], y);
});
// fourth staff
[453, 450, 444, 447, 441, 444, 447, 450, 453].forEach((y, i) => {
    if (y === 453) hline(score, xs[i] - 8, xs[i] + 9, 453);
    whole(score, xs[i], y);
});

// the score in the patch window, mostly hidden behind the editor
const under = document.getElementById('underScore');
[774, 779, 784, 789].forEach(y => hline(under, 177, 810, y, '#111'));
[289, 361, 422, 484, 550, 612, 673, 729].forEach(x => vline(under, x, 770, 816, '#111'));
add(under, 'path', { d: 'M177.500 770V816H810V770', fill: 'none', stroke: '#111', 'stroke-width': 2 });
clef(under, 186, 783, 0.85);
meterDigit(under, 237, 781, 0.8, 0.8);
meterDigit(under, 237, 790.5, 0.8, 0.8);
vline(under, 188, 806, 816, '#999');
[[257, 811], [313, 809], [385, 809], [446, 811], [508, 811], [574, 809], [636, 811], [697, 809], [753, 811]].forEach(n => {
    [794, 799, 804, 809].forEach(l => hline(under, n[0] - 7, n[0] + 7, l, '#222'));
    whole(under, n[0], n[1], 0.85);
});
[388, 600].forEach(x => add(under, 'circle', { cx: x, cy: 820.5, r: 2.5, fill: '#4a4ab4' }));

const style = document.createElementNS(NS, 'style');
style.textContent = '.tempo{font:9.5px "Liberation Sans",sans-serif;fill:#222}' +
    '.meter{font:bold 15px "Liberation Serif",serif;fill:#000}' +
    '.bar-num{font:10.5px "Liberation Sans",sans-serif;fill:#222;text-anchor:middle}';
score.appendChild(style);
```
